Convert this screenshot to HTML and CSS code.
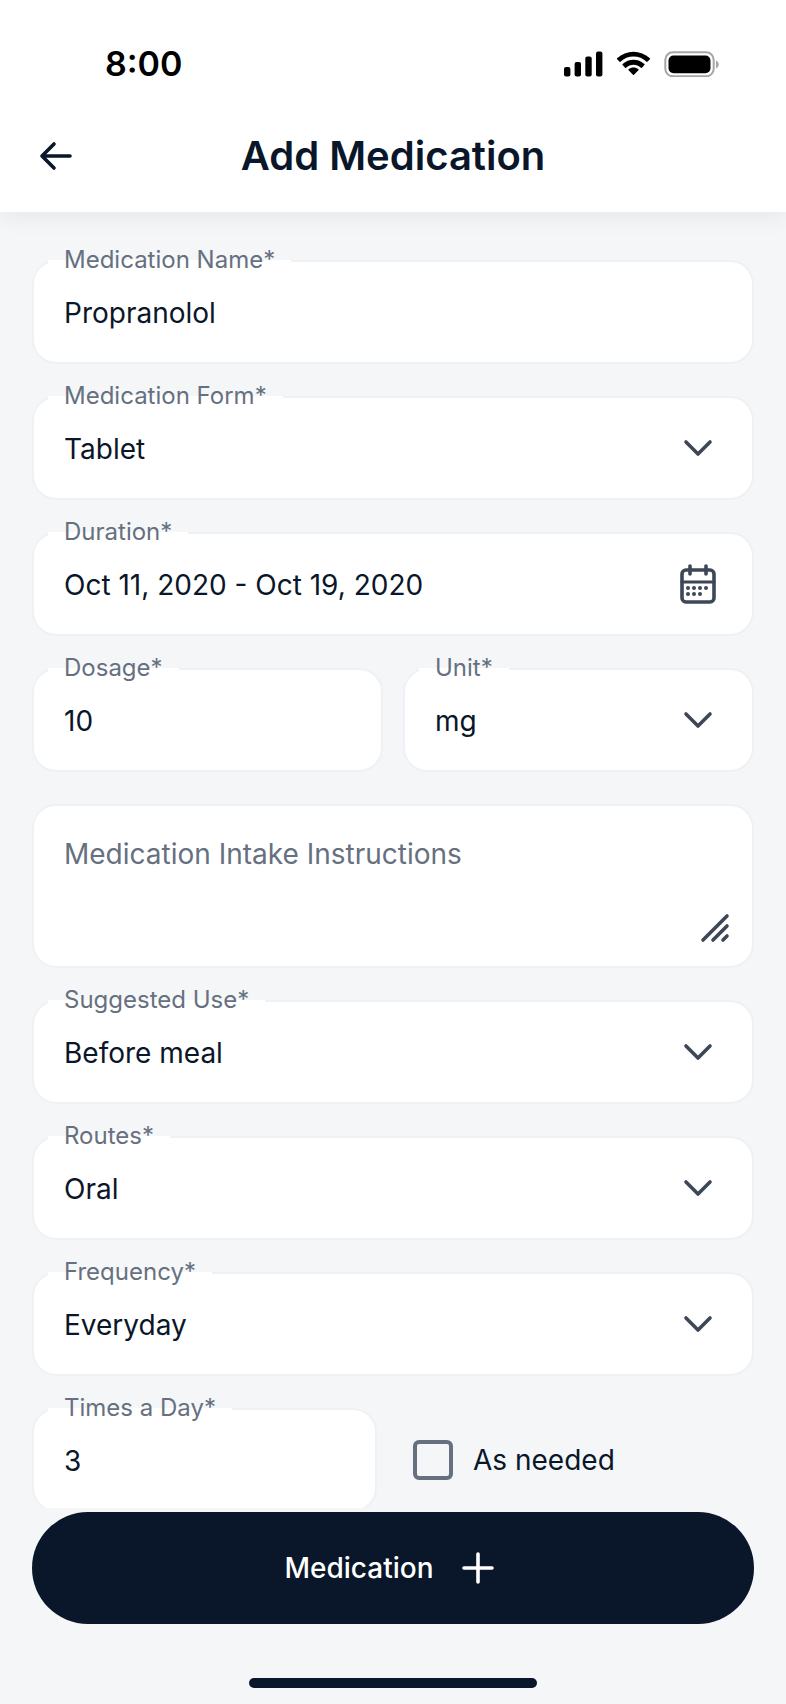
FILE: index.html
```html
<!DOCTYPE html>
<html lang="en">
<head>
  <meta charset="UTF-8">
  <meta name="viewport" content="width=device-width, initial-scale=1.0">
  <title>Add Medication</title>
  <link rel="stylesheet" href="styles.css">
</head>
<body>

  <!-- Shared icons -->
  <svg class="sprite" aria-hidden="true">
    <symbol id="chevron" viewBox="0 0 48 48">
      <path d="M12 18l12 12 12-12" fill="none" stroke="currentColor" stroke-width="3.6" stroke-linecap="round" stroke-linejoin="round"/>
    </symbol>
  </svg>

  <div class="screen">
    <header class="top">
      <!-- Status bar -->
      <div class="status-bar">
        <span class="time">8:00</span>
        <svg class="status-icons" viewBox="0 0 156 26" aria-hidden="true">
          <rect x="0" y="16" width="6.4" height="9.4" rx="2"/>
          <rect x="10.6" y="11" width="6.4" height="14.4" rx="2"/>
          <rect x="21.3" y="5.6" width="6.4" height="19.8" rx="2"/>
          <rect x="32" y="0.6" width="6.4" height="24.8" rx="2"/>
          <path d="M69.5 5.6c5 0 9.6 1.9 13 5.2c.3.2.7.2.9 0l2.500-2.500c.3-.3.3-.7 0-1c-9.200-8.800-23.700-8.800-32.800 0c-.3.3-.3.7 0 1l2.500 2.500c.2.300.6.300.9 0c3.500-3.300 8.100-5.200 13-5.200z"/>
          <path d="M69.500 13.800c2.700 0 5.400 1 7.400 2.900c.3.300.7.300 1 0l2.500-2.600c.3-.3.3-.7 0-1c-6.200-5.800-15.600-5.800-21.800 0c-.3.300-.3.700 0 1l2.500 2.600c.3.300.7.300 1 0c2-1.900 4.700-2.900 7.400-2.900z"/>
          <path d="M74.400 19.300c.3-.3.3-.7 0-1c-2.800-2.400-7-2.400-9.800 0c-.3.300-.3.700 0 1l4.400 4.500c.3.300.7.300 1 0z"/>
          <rect class="battery-case" x="101.300" y="1.300" width="48.400" height="24" rx="7.500"/>
          <rect x="104.500" y="4.500" width="42" height="17.800" rx="5"/>
          <path class="battery-tip" d="M152 9.500v8c1.600-.7 2.700-2.200 2.700-4s-1.100-3.300-2.700-4z"/>
        </svg>
      </div>

      <div class="title-bar">
        <button class="back-btn" type="button" aria-label="Back">
          <svg viewBox="0 0 48 48" aria-hidden="true">
            <path d="M38 24H10M22 12L10 24l12 12"/>
          </svg>
        </button>
        <h1>Add Medication</h1>
      </div>
    </header>

    <form class="med-form" id="med-form">
      <div class="field">
        <input type="text" id="med-name" value="Propranolol">
        <label for="med-name">Medication Name*</label>
      </div>

      <div class="field">
        <select id="med-form-type">
          <option>Tablet</option>
          <option>Capsule</option>
          <option>Syrup</option>
        </select>
        <svg class="icon"><use href="#chevron"/></svg>
        <label for="med-form-type">Medication Form*</label>
      </div>

      <div class="field">
        <input type="text" id="duration" value="Oct 11, 2020 - Oct 19, 2020">
        <svg class="icon" viewBox="0 0 48 48" aria-hidden="true">
          <g fill="none" stroke="currentColor" stroke-width="3.6" stroke-linecap="round">
            <rect x="8" y="10" width="32" height="32" rx="4"/>
            <path d="M16 6v8M32 6v8"/>
            <path d="M8 22h32" stroke-width="3.2"/>
          </g>
          <g fill="currentColor">
            <circle cx="14" cy="28" r="2"/>
            <circle cx="20" cy="28" r="2"/>
            <circle cx="26" cy="28" r="2"/>
            <circle cx="32" cy="28" r="2"/>
            <circle cx="14" cy="34" r="2"/>
            <circle cx="20" cy="34" r="2"/>
            <circle cx="26" cy="34" r="2"/>
          </g>
        </svg>
        <label for="duration">Duration*</label>
      </div>

      <div class="row">
        <div class="field">
          <input type="text" id="dosage" value="10">
          <label for="dosage">Dosage*</label>
        </div>
        <div class="field">
          <select id="unit">
            <option>mg</option>
            <option>ml</option>
          </select>
          <svg class="icon"><use href="#chevron"/></svg>
          <label for="unit">Unit*</label>
        </div>
      </div>

      <div class="field">
        <textarea id="instructions" aria-label="Medication Intake Instructions" placeholder="Medication Intake Instructions"></textarea>
        <svg class="resize-icon" viewBox="0 0 32 32" aria-hidden="true">
          <path d="M5 28L29 4M15 28l14-14M25 28l4-4"/>
        </svg>
      </div>

      <div class="field">
        <select id="suggested-use">
          <option>Before meal</option>
          <option>After meal</option>
        </select>
        <svg class="icon"><use href="#chevron"/></svg>
        <label for="suggested-use">Suggested Use*</label>
      </div>

      <div class="field">
        <select id="routes">
          <option>Oral</option>
          <option>Topical</option>
        </select>
        <svg class="icon"><use href="#chevron"/></svg>
        <label for="routes">Routes*</label>
      </div>

      <div class="field">
        <select id="frequency">
          <option>Everyday</option>
          <option>Weekly</option>
        </select>
        <svg class="icon"><use href="#chevron"/></svg>
        <label for="frequency">Frequency*</label>
      </div>

      <div class="row times-row">
        <div class="field">
          <input type="text" id="times" value="3">
          <label for="times">Times a Day*</label>
        </div>
        <label class="check">
          <input type="checkbox">
          As needed
        </label>
      </div>
    </form>

    <footer class="bottom">
      <button class="add-btn" type="submit" form="med-form">
        Medication
        <svg viewBox="0 0 48 48" aria-hidden="true">
          <path d="M24 10v28M10 24h28"/>
        </svg>
      </button>
      <div class="home-indicator"></div>
    </footer>
  </div>

</body>
</html>
```
FILE: styles.css
```css
* {
  box-sizing: border-box;
}

body {
  margin: 0;
  background: #f4f6f8;
  color: #0a1629;
  font-family: Inter, sans-serif;
  font-size: 28px;
  line-height: 34px;
}

input,
select,
textarea,
button {
  font: inherit;
  color: inherit;
}

.sprite {
  position: absolute;
  width: 0;
  height: 0;
}

.screen {
  display: flex;
  flex-direction: column;
  height: 100vh;
}

/* Header */
.top {
  position: relative;
  z-index: 1;
  background: #fff;
  box-shadow: 0 8px 20px rgba(10, 22, 41, 0.05);
}

.status-bar {
  display: flex;
  justify-content: space-between;
  align-items: center;
  height: 100px;
  padding: 28px 66px 0 105px;
}

.time {
  color: #000;
  font-size: 34px;
  font-weight: 600;
}

.status-icons {
  width: 156px;
  height: 26px;
}

.battery-case {
  fill: none;
  stroke: #a6a6a6;
  stroke-width: 2;
}

.battery-tip {
  fill: #a6a6a6;
}

.title-bar {
  display: grid;
  grid-template-columns: 48px 1fr 48px;
  align-items: center;
  height: 112px;
  padding: 0 32px;
}

.title-bar h1 {
  margin: 0;
  font-size: 40px;
  font-weight: 600;
  line-height: 48px;
  text-align: center;
}

.back-btn {
  width: 48px;
  height: 48px;
  padding: 0;
  border: none;
  background: none;
  cursor: pointer;
}

.back-btn svg,
.add-btn svg {
  display: block;
  width: 48px;
  height: 48px;
  fill: none;
  stroke: currentColor;
  stroke-width: 3.6;
  stroke-linecap: round;
  stroke-linejoin: round;
}

/* Form */
.med-form {
  flex: 1;
  min-height: 0;
  overflow-y: auto;
  scrollbar-width: none;
  display: flex;
  flex-direction: column;
  gap: 32px;
  padding: 48px 32px 32px;
}

.row {
  display: grid;
  grid-template-columns: 1fr 1fr;
  gap: 20px;
}

.times-row {
  gap: 32px;
}

.field {
  position: relative;
  display: grid;
  flex-shrink: 0;
}

.field input,
.field select,
.field textarea,
.field svg {
  grid-area: 1 / 1;
}

.field input,
.field select,
.field textarea {
  appearance: none;
  width: 100%;
  height: 104px;
  margin: 0;
  padding: 2px 30px 0;
  border: 2px solid #eef2f5;
  border-radius: 24px;
  outline: none;
  background: #fff;
}

.field textarea {
  height: 164px;
  padding: 31px 30px 30px;
  resize: none;
}

.field textarea::placeholder {
  color: #667080;
}

/* label sits on the top border, its lower half hides the line */
.field label {
  position: absolute;
  top: -16px;
  left: 16px;
  padding: 0 16px;
  background: linear-gradient(transparent 50%, #fff 50%);
  color: #667080;
  font-size: 24px;
  line-height: 32px;
}

.icon {
  align-self: center;
  justify-self: end;
  width: 48px;
  height: 48px;
  margin-right: 32px;
  color: #3d4757;
  pointer-events: none;
}

.resize-icon {
  align-self: end;
  justify-self: end;
  width: 32px;
  height: 32px;
  margin: 24px;
  fill: none;
  stroke: #3d4757;
  stroke-width: 3.6;
  stroke-linecap: round;
  pointer-events: none;
}

.check {
  display: flex;
  align-items: center;
  gap: 20px;
  padding-left: 4px;
}

.check input {
  appearance: none;
  width: 40px;
  height: 40px;
  margin: 0;
  border: 4px solid #667080;
  border-radius: 6px;
}

.check input:checked {
  background: #667080;
}

/* Bottom bar */
.bottom {
  display: flex;
  flex-direction: column;
  align-items: center;
  padding: 4px 32px 16px;
}

.add-btn {
  display: flex;
  justify-content: center;
  align-items: center;
  gap: 20px;
  width: 100%;
  height: 112px;
  border: none;
  border-radius: 56px;
  background: #0a1629;
  color: #fff;
  font-weight: 500;
  cursor: pointer;
}

.home-indicator {
  width: 40%;
  max-width: 288px;
  height: 10px;
  margin-top: 54px;
  border-radius: 5px;
  background: #0a1629;
}
```
